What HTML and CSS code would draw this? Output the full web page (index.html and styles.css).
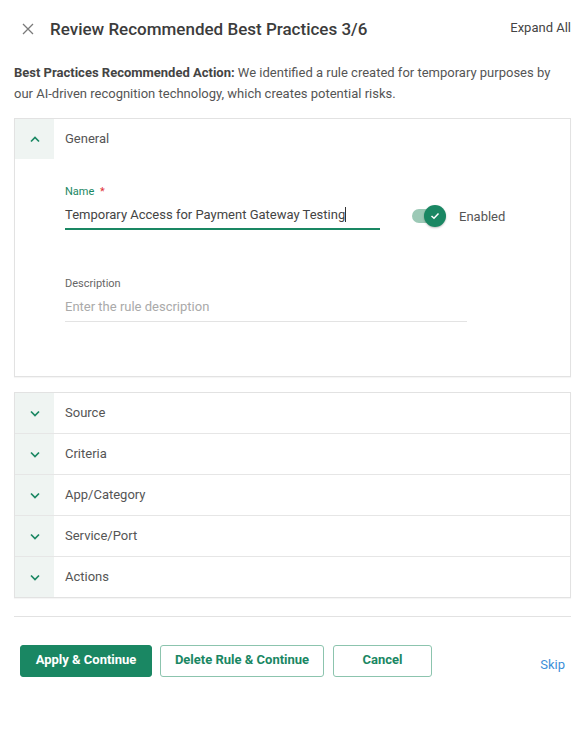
FILE: index.html
```html
<!DOCTYPE html>
<html lang="en">
<head>
    <meta charset="utf-8">
    <title>Review Recommended Best Practices</title>
    <link rel="stylesheet" href="styles.css">
</head>
<body>
<div class="dialog">
    <header class="dlg-head">
        <span class="close-btn">
            <svg width="12" height="12" viewBox="0 0 12 12"><path d="M1 1L11 11M11 1L1 11" stroke="#7a7a7a" stroke-width="1.3" fill="none"/></svg>
        </span>
        <h1 class="dlg-title">Review Recommended Best Practices 3/6</h1>
        <a class="expand-all">Expand All</a>
    </header>

    <p class="intro"><b>Best Practices Recommended Action:</b> We identified a rule created for temporary purposes by our AI-driven recognition technology, which creates potential risks.</p>

    <section class="panel">
        <div class="row open">
            <span class="toggle">
                <svg width="10" height="7" viewBox="0 0 10 7"><path d="M1 5.5L5 1.5L9 5.5" stroke="#1a8763" stroke-width="1.7" fill="none"/></svg>
            </span>
            <span class="row-title">General</span>
        </div>
        <div class="panel-body">
            <div class="field-line">
                <div class="field name-field">
                    <label class="f-label active">Name <i class="req">*</i></label>
                    <div class="f-input focused">Temporary Access for Payment Gateway Testing<span class="caret"></span></div>
                </div>
                <div class="switch-wrap">
                    <span class="switch">
                        <span class="knob">
                            <svg width="10" height="8" viewBox="0 0 10 8"><path d="M1.5 4L4 6.3L8.5 1.6" stroke="#fff" stroke-width="1.5" fill="none"/></svg>
                        </span>
                    </span>
                    <span class="switch-label">Enabled</span>
                </div>
            </div>
            <div class="field desc-field">
                <label class="f-label">Description</label>
                <div class="f-input placeholder">Enter the rule description</div>
            </div>
        </div>
    </section>

    <section class="panel list">
        <div class="row">
            <span class="toggle"><svg width="10" height="7" viewBox="0 0 10 7"><path d="M1 1.5L5 5.5L9 1.5" stroke="#1a8763" stroke-width="1.7" fill="none"/></svg></span>
            <span class="row-title">Source</span>
        </div>
        <div class="row">
            <span class="toggle"><svg width="10" height="7" viewBox="0 0 10 7"><path d="M1 1.5L5 5.5L9 1.5" stroke="#1a8763" stroke-width="1.7" fill="none"/></svg></span>
            <span class="row-title">Criteria</span>
        </div>
        <div class="row">
            <span class="toggle"><svg width="10" height="7" viewBox="0 0 10 7"><path d="M1 1.5L5 5.5L9 1.5" stroke="#1a8763" stroke-width="1.7" fill="none"/></svg></span>
            <span class="row-title">App/Category</span>
        </div>
        <div class="row">
            <span class="toggle"><svg width="10" height="7" viewBox="0 0 10 7"><path d="M1 1.5L5 5.5L9 1.5" stroke="#1a8763" stroke-width="1.7" fill="none"/></svg></span>
            <span class="row-title">Service/Port</span>
        </div>
        <div class="row">
            <span class="toggle"><svg width="10" height="7" viewBox="0 0 10 7"><path d="M1 1.5L5 5.5L9 1.5" stroke="#1a8763" stroke-width="1.7" fill="none"/></svg></span>
            <span class="row-title">Actions</span>
        </div>
    </section>

    <footer class="dlg-foot">
        <button class="btn primary">Apply &amp; Continue</button>
        <button class="btn outline delete">Delete Rule &amp; Continue</button>
        <button class="btn outline cancel">Cancel</button>
        <a class="skip">Skip</a>
    </footer>
</div>
</body>
</html>
```

FILE: styles.css
```css
html, body {
    margin: 0;
    padding: 0;
    background: #fff;
    font-family: Roboto, "Liberation Sans", Arial, sans-serif;
    color: #444;
}

.dialog {
    width: 557px;
    padding: 0 17px 0 14px;
}

.dlg-head {
    display: flex;
    align-items: center;
    height: 57px;
}

.close-btn {
    display: flex;
    width: 12px;
    height: 12px;
    margin-left: 8px;
    margin-top: 1px;
}

.dlg-title {
    margin: 0 0 0 16px;
    font-size: 17px;
    font-weight: 500;
    color: #3c3c3c;
    flex: 1;
}

.expand-all {
    font-size: 13px;
    color: #444;
    margin-top: -2px;
}

.intro {
    margin: 5px 0 14px;
    font-size: 13px;
    line-height: 21px;
    color: #555;
}

.intro b {
    font-weight: 700;
    color: #444;
}

.panel {
    border: 1px solid #e2e2e2;
    box-shadow: 0 1px 1px rgba(0, 0, 0, 0.04);
}

.row {
    display: flex;
    align-items: stretch;
    height: 40px;
    border-bottom: 1px solid #e6e6e6;
}

.row.open {
    border-bottom: none;
}

.list .row:last-child {
    border-bottom: none;
}

.toggle {
    width: 39px;
    background: #eff4f2;
    display: flex;
    align-items: center;
    justify-content: center;
}

.row-title {
    display: flex;
    align-items: center;
    padding: 0 0 2px 11px;
    font-size: 13px;
    color: #555;
}

.panel-body {
    padding: 26px 0 54px 50px;
}

.field-line {
    display: flex;
    align-items: flex-end;
}

.field {
    display: flex;
    flex-direction: column;
}

.name-field {
    width: 315px;
}

.desc-field {
    width: 402px;
    margin-top: 47px;
}

.f-label {
    font-size: 11px;
    color: #666;
    line-height: 14px;
}

.f-label.active {
    color: #1a8763;
}

.req {
    font-style: normal;
    color: #e0323a;
    margin-left: 3px;
}

.f-input {
    font-size: 13px;
    line-height: 16px;
    padding: 8px 0 6px;
    color: #444;
    border-bottom: 1px solid #e3e3e3;
    white-space: nowrap;
}

.f-input.focused {
    border-bottom: 2px solid #1a8763;
    padding-bottom: 5px;
}

.f-input.placeholder {
    color: #aaa;
}

.caret {
    display: inline-block;
    width: 1px;
    height: 15px;
    background: #333;
    vertical-align: -3px;
}

.switch-wrap {
    display: flex;
    align-items: center;
    margin-left: 32px;
    height: 28px;
}

.switch {
    position: relative;
    display: inline-block;
    width: 30px;
    height: 14px;
    border-radius: 7px;
    background: #9cc9b6;
    margin-right: 17px;
}

.switch .knob {
    position: absolute;
    left: 12px;
    top: -4px;
    width: 22px;
    height: 22px;
    border-radius: 50%;
    background: #1a8763;
    box-shadow: 0 1px 2px rgba(0, 0, 0, 0.25);
    display: flex;
    align-items: center;
    justify-content: center;
}

.switch-label {
    font-size: 13px;
    color: #555;
}

.list {
    margin-top: 15px;
}

.dlg-foot {
    display: flex;
    align-items: center;
    border-top: 1px solid #e2e2e2;
    margin-top: 18px;
    padding: 28px 6px 0 6px;
}

.btn {
    height: 32px;
    border-radius: 3px;
    font-family: Roboto, "Liberation Sans", Arial, sans-serif;
    font-size: 13px;
    font-weight: 700;
    padding: 0 0 3px;
    margin-right: 8px;
    white-space: nowrap;
    cursor: pointer;
}

.btn.primary {
    background: #1a8763;
    border: 1px solid #1a8763;
    color: #fff;
    width: 132px;
}

.btn.outline {
    background: #fff;
    border: 1px solid #8cc4ae;
    color: #1a8763;
}

.btn.delete {
    width: 164px;
}

.btn.cancel {
    width: 99px;
    margin-left: 1px;
}

.skip {
    margin-left: auto;
    margin-top: 6px;
    font-size: 13px;
    color: #3d8fd9;
}
```
